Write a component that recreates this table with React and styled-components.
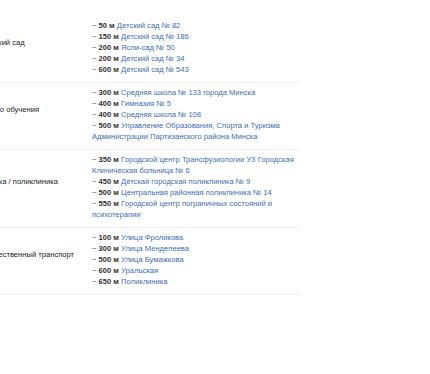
import React from 'react';
import styled, { createGlobalStyle } from "styled-components";

const GlobalStyle = createGlobalStyle`
  html, body {
    margin: 0;
    padding: 0;
    background: #fff;
    overflow: hidden;
  }
  body {
    font-family: "Liberation Sans", Arial, sans-serif;
  }
`;

const Page = styled.div`
  width: 430px;
  height: 374px;
  overflow: hidden;
  padding-top: 16px;
  box-sizing: border-box;
`;

const Table = styled.div`
  display: flex;
  flex-direction: column;
  width: 318px;
  margin-left: -18px;
`;

const Row = styled.div`
  display: grid;
  grid-template-columns: 110px 1fr;
  border-bottom: 1px solid #f1f1f1;
  padding: 4px 0 7px;
`;

const Label = styled.div`
  display: flex;
  align-items: center;
  padding-bottom: 11px;
  font-size: 7.6px;
  color: #222;
`;

const List = styled.ul`
  list-style: none;
  margin: 0;
  padding: 0;
  font-size: 7.6px;
  line-height: 11px;
  color: #333;
`;

const Dist = styled.span`
  color: #555;
`;

const Meters = styled.b`
  color: #333;
  font-weight: bold;
`;

const Place = styled.a`
  color: #3d6db3;
  text-decoration: none;
`;

const data = [
  {
    label: "Детский сад",
    items: [
      ["50", "Детский сад № 82"],
      ["150", "Детский сад № 186"],
      ["200", "Ясли-сад № 50"],
      ["200", "Детский сад № 34"],
      ["600", "Детский сад № 543"],
    ],
  },
  {
    label: "Место обучения",
    items: [
      ["300", "Средняя школа № 133 города Минска"],
      ["400", "Гимназия № 5"],
      ["400", "Средняя школа № 108"],
      ["500", "Управление Образования, Спорта и Туризма Администрации Партизанского района Минска"],
    ],
  },
  {
    label: "Аптека / поликлиника",
    items: [
      ["350", "Городской центр Трансфузиологии УЗ Городская Клиническая больница № 6"],
      ["450", "Детская городская поликлиника № 9"],
      ["500", "Центральная районная поликлиника № 14"],
      ["550", "Городской центр пограничных состояний и психотерапии"],
    ],
  },
  {
    label: "Общественный транспорт",
    items: [
      ["100", "Улица Фроликова"],
      ["300", "Улица Менделеева"],
      ["500", "Улица Бумажкова"],
      ["600", "Уральская"],
      ["650", "Поликлиника"],
    ],
  },
];

const App = () => {
  return (
    <Page>
      <GlobalStyle />
      <Table>
        {data.map((row) => (
          <Row key={row.label}>
            <Label>{row.label}</Label>
            <List>
              {row.items.map(([m, name], i) => (
                <li key={i}>
                  <Dist>~ </Dist>
                  <Meters>{m} м</Meters> <Place href="#">{name}</Place>
                </li>
              ))}
            </List>
          </Row>
        ))}
      </Table>
    </Page>
  );
};

export default App;
